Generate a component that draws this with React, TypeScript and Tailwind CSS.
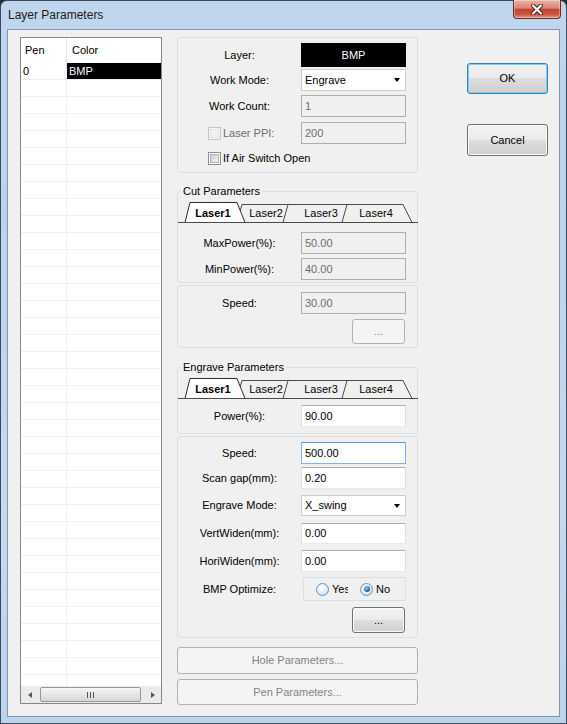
import React from 'react';

/*
 * Layer Parameters dialog (Win7 Aero frame, classic MFC controls).
 * Everything is laid out by flow; the only overlay is the tab-strip text
 * sitting on top of its drawn trapezoid tabs.
 */

const win7Button =
  'rounded-[3px] border border-[#707070] bg-[linear-gradient(180deg,#f2f2f2_0%,#ebebeb_49%,#dddddd_50%,#cfcfcf_100%)] shadow-[inset_0_0_0_1px_#fbfbfb]';
const disabledButton = 'rounded-[3px] border border-[#adb2b5] bg-[#f4f4f4] text-[#838383]';

function Label({ children, muted }: { children: React.ReactNode; muted?: boolean }) {
  return <div className={`w-[123px] text-center ${muted ? 'text-[#6d6d6d]' : 'text-black'}`}>{children}</div>;
}

type BoxKind = 'disabled' | 'enabled' | 'focused';

function TextBox({ value, kind, h }: { value: string; kind: BoxKind; h: string }) {
  const look =
    kind === 'disabled'
      ? 'border-[#afafaf] bg-[#f0f0f0] text-[#6d6d6d]'
      : kind === 'focused'
        ? 'border-[#7eb4ea] border-t-[#569de5] bg-white text-black'
        : 'border-[#dbdfe6] border-t-[#abadb3] border-b-[#e3e9ef] bg-white text-black';
  return <div className={`flex w-[105px] items-center border pl-[3px] ${h} ${look}`}>{value}</div>;
}

function Combo({ value, h }: { value: string; h: string }) {
  return (
    <div className={`flex w-[105px] items-center justify-between border border-[#c9cbd1] bg-white pl-[3px] pr-[5px] ${h}`}>
      <span>{value}</span>
      <span className="h-0 w-0 border-x-[3.5px] border-t-[4px] border-x-transparent border-t-black" />
    </div>
  );
}

function CheckBox({ disabled }: { disabled?: boolean }) {
  return (
    <span
      className={`flex h-[13px] w-[13px] shrink-0 items-center justify-center border ${
        disabled ? 'border-[#c5c5c5] bg-[#f7f7f7]' : 'border-[#8e8f8f] bg-white'
      }`}
    >
      <span
        className={`h-[9px] w-[9px] border ${
          disabled ? 'border-[#e3e3e3] bg-[#f2f2f2]' : 'border-[#b3b3b3] bg-[linear-gradient(135deg,#c8c8c8,#f7f7f7)]'
        }`}
      />
    </span>
  );
}

function Radio({ checked }: { checked?: boolean }) {
  return (
    <span className="flex h-[13px] w-[13px] shrink-0 items-center justify-center rounded-full border border-[#6d8fb3] bg-[radial-gradient(circle_at_40%_35%,#ffffff_0%,#dcefff_55%,#a9d2f1_100%)]">
      {checked && (
        <span className="h-[6px] w-[6px] rounded-full bg-[radial-gradient(circle_at_40%_35%,#9fd4f7_0%,#2a67a8_60%,#0f3c70_100%)]" />
      )}
    </span>
  );
}

function Row({ label, muted, className, children }: { label: React.ReactNode; muted?: boolean; className: string; children: React.ReactNode }) {
  return (
    <div className={`flex items-center ${className}`}>
      <Label muted={muted}>{label}</Label>
      {children}
    </div>
  );
}

function LaserTabs() {
  return (
    <div className="relative mt-[4px] h-[21px]">
      <svg className="absolute inset-0" width="240" height="21" viewBox="0 0 240 21">
        <polygon points="59,20.5 64,2.5 117,2.5 122,20.5" fill="#f0f0f0" stroke="#4a4a4a" />
        <polygon points="105,20.5 110,2.5 172,2.5 178,20.5" fill="#f0f0f0" stroke="#4a4a4a" />
        <polygon points="164,20.5 169,2.5 225,2.5 234,20.5" fill="#f0f0f0" stroke="#4a4a4a" />
        <polygon points="7,20.5 12,0.5 59,0.5 67,20.5" fill="#ffffff" stroke="#2f2f2f" />
        <path d="M0 20.5H240" stroke="#4a4a4a" />
      </svg>
      <div className="relative flex h-full items-center pl-[9px] pt-[1px]">
        <span className="w-[52px] text-center font-bold">Laser1</span>
        <span className="w-[54px] pt-[1px] text-center">Laser2</span>
        <span className="w-[56px] pt-[1px] text-center">Laser3</span>
        <span className="w-[54px] pt-[1px] text-center">Laser4</span>
      </div>
    </div>
  );
}

function ListView() {
  const rows = Array.from({ length: 38 }, (_, i) => i);
  return (
    <div className="flex h-[667px] w-[142px] flex-col border border-[#828790] bg-white">
      <div className="flex h-[25px] shrink-0 items-center">
        <div className="flex h-full w-[46px] items-center border-r border-[#e5e5e5] pl-[4px]">Pen</div>
        <div className="pl-[5px]">Color</div>
      </div>
      <div className="flex-1 overflow-hidden">
        {rows.map((i) => (
          <div key={i} className="flex h-[17px] border-b border-[#f0f0f0]">
            <div className="flex w-[46px] items-center border-r border-[#f0f0f0] pl-[2px]">{i === 0 ? '0' : ''}</div>
            <div className={`flex flex-1 items-center pl-[2px] ${i === 0 ? 'bg-black text-white' : ''}`}>{i === 0 ? 'BMP' : ''}</div>
          </div>
        ))}
      </div>
      <div className="flex h-[17px] shrink-0 items-center bg-[#ebebeb]">
        <div className="flex w-[17px] justify-center">
          <span className="h-0 w-0 border-y-[3.5px] border-r-[4px] border-y-transparent border-r-[#555]" />
        </div>
        <div className="ml-[2px] flex h-[15px] w-[101px] items-center justify-center gap-[2px] rounded-[2px] border border-[#979797] bg-[linear-gradient(180deg,#f6f6f6_0%,#e6e6e6_50%,#d6d6d6_100%)]">
          <span className="h-[6px] w-px bg-[#555]" />
          <span className="h-[6px] w-px bg-[#555]" />
          <span className="h-[6px] w-px bg-[#555]" />
        </div>
        <div className="flex-1" />
        <div className="flex w-[17px] justify-center">
          <span className="h-0 w-0 border-y-[3.5px] border-l-[4px] border-y-transparent border-l-[#555]" />
        </div>
      </div>
    </div>
  );
}

function CloseButton() {
  return (
    <div className="-mr-[1px] -mt-[1px] flex h-[19px] w-[48px] items-center justify-center rounded-b-[4px] border border-t-0 border-[#6b2a22] bg-[linear-gradient(180deg,#eab3a6_0%,#d98474_45%,#c4442f_52%,#cf543c_80%,#e39a84_100%)] shadow-[inset_0_0_0_1px_rgba(255,255,255,0.35)]">
      <svg width="12" height="11" viewBox="0 0 12 11">
        <path d="M2 1.5L10 9.5M10 1.5L2 9.5" stroke="#4a1d16" strokeWidth="4" strokeLinecap="round" />
        <path d="M2 1.5L10 9.5M10 1.5L2 9.5" stroke="#ffffff" strokeWidth="2.2" strokeLinecap="round" />
      </svg>
    </div>
  );
}

export default function App() {
  return (
    <div className="h-[724px] w-[567px] bg-[#2a2f35] font-['Liberation_Sans',Arial,sans-serif] text-[11px] text-black">
      <div className="flex h-full flex-col rounded-t-[7px] border border-[#3b4b5e] bg-[linear-gradient(180deg,#c0d6ee_0%,#bcd3ec_30%,#c6daf0_70%,#bdd3ec_100%)] px-[6px] pb-[6px]">
        {/* Title bar */}
        <div className="flex h-[28px] shrink-0 items-start justify-between">
          <span className="pl-[1px] pt-[7px] text-[12px] leading-[14px] text-[#1b1b1b]">Layer Parameters</span>
          <CloseButton />
        </div>

        {/* Client area */}
        <div className="flex flex-1 border border-[#8497b0] bg-[#f0f0f0] pl-[12px] pt-[7px]">
          <ListView />

          <div className="ml-[15px] flex w-[241px] flex-col">
            {/* Layer / work mode box */}
            <div className="flex h-[136px] flex-col rounded-[3px] border border-[#d5dfe5]">
              <Row label="Layer:" className="mt-[5px]">
                <div className="flex h-[24px] w-[105px] items-center justify-center bg-black text-white">BMP</div>
              </Row>
              <Row label="Work Mode:" className="mt-[2px]">
                <Combo value="Engrave" h="h-[22px]" />
              </Row>
              <Row label="Work Count:" className="mt-[4px]">
                <TextBox value="1" kind="disabled" h="h-[22px]" />
              </Row>
              <div className="mt-[5px] flex items-center">
                <div className="flex w-[123px] items-center pl-[30px] text-[#6d6d6d]">
                  <CheckBox disabled />
                  <span className="ml-[2px]">Laser PPI:</span>
                </div>
                <TextBox value="200" kind="disabled" h="h-[22px]" />
              </div>
              <div className="mt-[8px] flex h-[13px] items-center pl-[30px]">
                <CheckBox />
                <span className="ml-[2px]">If Air Switch Open</span>
              </div>
            </div>

            {/* Cut parameters */}
            <fieldset className="mt-[12px] rounded-[3px] border border-[#d5dfe5] pb-[2px]">
              <legend className="ml-[3px] px-[2px] leading-[13px]">Cut Parameters</legend>
              <LaserTabs />
              <Row label="MaxPower(%):" className="mt-[9px]">
                <TextBox value="50.00" kind="disabled" h="h-[22px]" />
              </Row>
              <Row label="MinPower(%):" className="mt-[4px]">
                <TextBox value="40.00" kind="disabled" h="h-[22px]" />
              </Row>
            </fieldset>
            <div className="mt-[2px] flex flex-col rounded-[3px] border border-[#d5dfe5] pb-[3px]">
              <Row label="Speed:" className="mt-[6px]">
                <TextBox value="30.00" kind="disabled" h="h-[22px]" />
              </Row>
              <div className="mt-[5px] flex justify-end pr-[12px]">
                <button className={`flex h-[25px] w-[53px] items-center justify-center ${disabledButton}`}>...</button>
              </div>
            </div>

            {/* Engrave parameters */}
            <fieldset className="mt-[13px] rounded-[3px] border border-[#d5dfe5] pb-[6px]">
              <legend className="ml-[3px] px-[2px] leading-[13px]">Engrave Parameters</legend>
              <LaserTabs />
              <Row label="Power(%):" className="mt-[6px]">
                <TextBox value="90.00" kind="enabled" h="h-[22px]" />
              </Row>
            </fieldset>
            <div className="mt-[2px] flex flex-col rounded-[3px] border border-[#d5dfe5] pb-[4px]">
              <Row label="Speed:" className="mt-[5px]">
                <TextBox value="500.00" kind="focused" h="h-[22px]" />
              </Row>
              <Row label="Scan gap(mm):" className="mt-[3px]">
                <TextBox value="0.20" kind="enabled" h="h-[22px]" />
              </Row>
              <Row label="Engrave Mode:" className="mt-[6px]">
                <Combo value="X_swing" h="h-[21px]" />
              </Row>
              <Row label="VertWiden(mm):" className="mt-[7px]">
                <TextBox value="0.00" kind="enabled" h="h-[21px]" />
              </Row>
              <Row label="HoriWiden(mm):" className="mt-[6px]">
                <TextBox value="0.00" kind="enabled" h="h-[22px]" />
              </Row>
              <Row label="BMP Optimize:" className="mt-[5px]">
                <div className="ml-[2px] flex h-[24px] w-[103px] items-center rounded-[2px] border border-[#d5dfe5] pl-[12px]">
                  <Radio />
                  <span className="ml-[3px] w-[16px] overflow-hidden whitespace-nowrap">Yes</span>
                  <span className="ml-[12px]">
                    <Radio checked />
                  </span>
                  <span className="ml-[3px]">No</span>
                </div>
              </Row>
              <div className="mt-[6px] flex justify-end pr-[12px]">
                <button className={`flex h-[26px] w-[53px] items-center justify-center ${win7Button}`}>...</button>
              </div>
            </div>

            <button className={`mt-[9px] flex h-[27px] w-full items-center justify-center ${disabledButton}`}>Hole Parameters...</button>
            <button className={`mt-[5px] flex h-[26px] w-full items-center justify-center ${disabledButton}`}>Pen Parameters...</button>
          </div>

          {/* OK / Cancel */}
          <div className="ml-[49px] flex flex-col pt-[26px]">
            <button className="flex h-[31px] w-[81px] items-center justify-center rounded-[3px] border border-[#3c7fb1] bg-[linear-gradient(180deg,#f2f2f2_0%,#ebebeb_49%,#dddddd_50%,#cfcfcf_100%)] shadow-[inset_0_0_0_1px_#74d0f7]">
              OK
            </button>
            <button className={`mt-[30px] flex h-[32px] w-[81px] items-center justify-center ${win7Button}`}>Cancel</button>
          </div>
        </div>
      </div>
    </div>
  );
}
